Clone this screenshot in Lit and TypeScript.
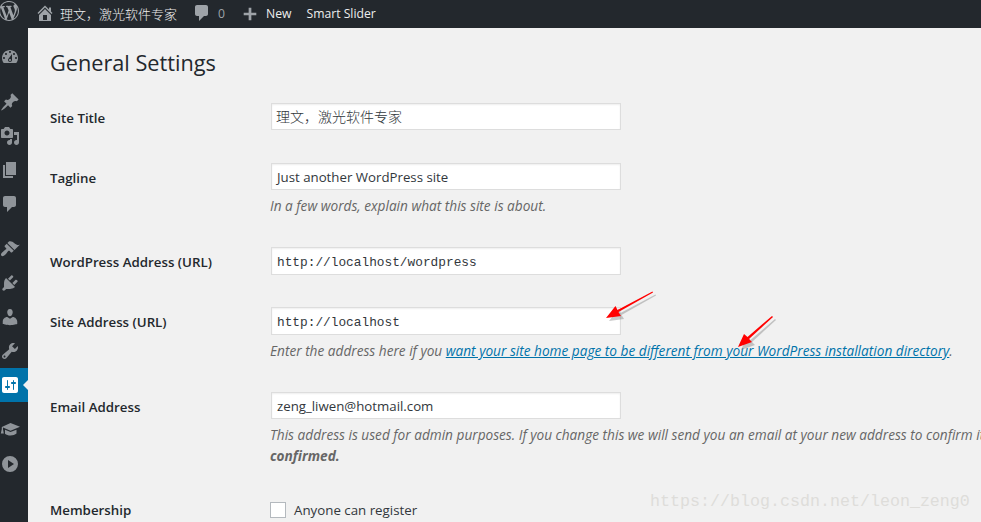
import { LitElement, html, css, svg } from "lit";
import { customElement } from "lit/decorators.js";

const P: Record<string, string> = {
  wp: "M20 10c0-5.51-4.49-10-10-10C4.48 0 0 4.49 0 10c0 5.52 4.48 10 10 10 5.51 0 10-4.48 10-10zM7.78 15.37L4.37 6.22c.55-.02 1.17-.08 1.17-.08.5-.06.44-1.13-.06-1.11 0 0-1.45.11-2.37.11-.18 0-.37 0-.58-.01C4.12 2.69 6.87 1.11 10 1.11c2.33 0 4.45.87 6.05 2.34-.68-.11-1.65.39-1.65 1.58 0 .74.45 1.36.9 2.1.35.61.55 1.36.55 2.46 0 1.49-1.4 5-1.4 5l-3.03-8.37c.54-.02.82-.17.82-.17.5-.05.44-1.25-.06-1.22 0 0-1.44.12-2.38.12-.87 0-2.33-.12-2.33-.12-.5-.03-.56 1.2-.06 1.22l.92.08 1.26 3.41zM17.41 10c.24-.64.74-1.87.43-4.25.7 1.29 1.05 2.71 1.05 4.25 0 3.29-1.73 6.24-4.4 7.78.97-2.59 1.94-5.2 2.92-7.78zM6.1 18.09C3.12 16.65 1.11 13.53 1.11 10c0-1.3.23-2.48.72-3.59C3.25 10.3 4.67 14.2 6.1 18.09zm4.03-6.63l2.58 6.98c-.86.29-1.76.45-2.71.45-.79 0-1.57-.11-2.29-.33.81-2.38 1.62-4.74 2.42-7.1z",
  home: "M16 8.5l1.53 1.53-1.06 1.06L10 4.62l-6.47 6.47-1.06-1.06L10 2.5l4 4v-2h2v4zm-6-2.46l6 5.99V18H4v-5.97zM12 17v-5H8v5h4z",
  comment: "M5 2h9c1.1 0 2 .9 2 2v7c0 1.1-.9 2-2 2h-2l-5 5v-5H5c-1.1 0-2-.9-2-2V4c0-1.1.9-2 2-2z",
  plus: "M17 8.5v3h-5.5V17h-3v-5.5H3v-3h5.5V3h3v5.5z",
  dash: "M3.76 16h12.48c1.1-1.37 1.76-3.11 1.76-5 0-4.42-3.58-8-8-8s-8 3.58-8 8c0 1.89.66 3.63 1.76 5zM10 4c.55 0 1 .45 1 1s-.45 1-1 1-1-.45-1-1 .45-1 1-1zM6 6c.55 0 1 .45 1 1s-.45 1-1 1-1-.45-1-1 .45-1 1-1zm8 0c.55 0 1 .45 1 1s-.45 1-1 1-1-.45-1-1 .45-1 1-1zm-5.37 5.55L12 7v6c0 1.1-.9 2-2 2s-2-.9-2-2c0-.57.24-1.08.63-1.45zM4 10c.55 0 1 .45 1 1s-.45 1-1 1-1-.45-1-1 .45-1 1-1zm12 0c.55 0 1 .45 1 1s-.45 1-1 1-1-.45-1-1 .45-1 1-1zm-5 3c0-.55-.45-1-1-1s-1 .45-1 1 .45 1 1 1 1-.45 1-1z",
  pin: "M10.44 3.02l1.82-1.82 6.36 6.35-1.83 1.82c-1.05-.68-2.48-.57-3.41.36l-.75.75c-.92.93-1.04 2.35-.35 3.41l-1.83 1.82-2.41-2.41-2.8 2.79c-.42.42-3.38 2.71-3.8 2.29s1.86-3.39 2.28-3.81l2.79-2.79L4.1 9.36l1.83-1.82c1.05.69 2.48.57 3.4-.36l.75-.75c.93-.92 1.05-2.35.36-3.41z",
  media: "M13 11V4c0-.55-.45-1-1-1h-1.67L9 1H5L3.67 3H2c-.55 0-1 .45-1 1v7c0 .55.45 1 1 1h10c.55 0 1-.45 1-1zM7 4.5c1.38 0 2.5 1.12 2.5 2.5S8.38 9.5 7 9.5 4.5 8.38 4.5 7 5.62 4.5 7 4.5zM14 6h5v10.5c0 1.38-1.12 2.5-2.5 2.5S14 17.88 14 16.5s1.12-2.5 2.5-2.5c.17 0 .34.02.5.05V9h-3V6zm-4 8.05V13h2v3.5c0 1.38-1.12 2.5-2.5 2.5S7 17.88 7 16.5 8.12 14 9.5 14c.17 0 .34.02.5.05z",
  page: "M6 15V2h10v13H6zm-1 1h8v2H3V5h2v11z",
  brush: "M14.48 11.06L7.41 3.99l1.5-1.5c.5-.56 2.3-.47 3.51.32 1.21.8 1.43 1.28 2.91 2.1 1.18.64 2.45 1.26 4.45.85zm-.71.71L6.7 4.7 4.93 6.47c-.39.39-.39 1.02 0 1.41l1.06 1.06c.39.39.39 1.03 0 1.42-.6.6-1.43 1.11-2.21 1.69-.35.26-.7.53-1.01.84C1.43 13.71.27 15.57 1.4 16.7c1.13 1.13 2.99-.03 4.31-1.38.31-.31.58-.66.84-1.01.58-.78 1.09-1.61 1.69-2.21.39-.39 1.02-.39 1.41 0l1.06 1.06c.39.39 1.02.39 1.41 0z",
  plug: "M13.11 4.36L9.87 7.6 8 5.73l3.24-3.24c.35-.34 1.05-.2 1.56.32.52.51.66 1.21.31 1.55zm-8 1.77l.91-1.12 9.01 9.01-1.19.84c-.71.71-2.63 1.16-3.82 1.16H6.14L4.9 17.26c-.59.59-1.54.59-2.12 0-.59-.58-.59-1.53 0-2.12l1.24-1.24v-3.88c0-1.13.4-3.19 1.09-3.89zm7.26 3.97l3.24-3.24c.34-.35 1.04-.21 1.55.31.52.51.66 1.21.31 1.55l-3.24 3.25z",
  user: "M10 9.25c-2.27 0-2.73-3.44-2.73-3.44C7 4.02 7.82 2 9.97 2c2.16 0 2.98 2.02 2.71 3.81 0 0-.41 3.44-2.68 3.44zm0 2.57L12.72 10c2.39 0 4.52 2.33 4.52 4.53v2.49s-3.65 1.13-7.24 1.13c-3.65 0-7.24-1.13-7.24-1.13v-2.49c0-2.25 1.94-4.48 4.47-4.48z",
  tools: "M16.68 9.77c-1.34 1.34-3.3 1.67-4.95.99l-5.41 6.52c-.99.99-2.59.99-3.58 0s-.99-2.59 0-3.57l6.52-5.42c-.68-1.65-.35-3.61.99-4.95 1.28-1.28 3.12-1.62 4.72-1.06l-2.89 2.89 2.82 2.82 2.86-2.87c.53 1.58.18 3.39-1.08 4.65zM3.81 16.21c.4.39 1.04.39 1.43 0 .4-.4.4-1.04 0-1.43-.39-.4-1.03-.4-1.43 0-.39.39-.39 1.03 0 1.43z",
  settings: "M18 16V4c0-1.1-.9-2-2-2H4c-1.1 0-2 .9-2 2v12c0 1.1.9 2 2 2h12c1.1 0 2-.9 2-2zM8 11h1c.55 0 1 .45 1 1s-.45 1-1 1H8v1.5c0 .28-.22.5-.5.5s-.5-.22-.5-.5V13H6c-.55 0-1-.45-1-1s.45-1 1-1h1V5.5c0-.28.22-.5.5-.5s.5.22.5.5V11zm5-2h-1c-.55 0-1-.45-1-1s.45-1 1-1h1V5.5c0-.28.22-.5.5-.5s.5.22.5.5V7h1c.55 0 1 .45 1 1s-.45 1-1 1h-1v5.5c0 .28-.22.5-.5.5s-.5-.22-.5-.5V9z",
  cap: "M10.5 3L20 6.8l-9.5 3.9L3 7.6V9.2l.8 4.3H.8L1.8 9V6.9zM5 9.8l5.5 2.3 6-2.4v3.9c-1.4 1.2-3.5 1.9-6 1.9-2.3 0-4.2-.7-5.5-1.8z",
  play: "M10 2a8 8 0 1 1 0 16 8 8 0 0 1 0-16zM8 6v8l6-4z",
};

const icon = (n: string) =>
  html`<svg class="ic" viewBox="0 0 20 20" width="20" height="20"><path fill-rule="evenodd" d=${P[n]}></path></svg>`;

const groups = [["dash"], ["pin", "media", "page", "comment"], ["brush", "plug", "user", "tools", "settings"], ["cap", "play"]];

@customElement("app-root")
export class AppRoot extends LitElement {
  static styles = css`
    :host { display: block; position: relative; width: 981px; height: 522px; overflow: hidden; background: #f1f1f1;
      font-family: "Open Sans", "Noto Sans CJK SC", sans-serif; color: #23282d; }
    .bar { height: 28px; background: #23282d; color: #eee; display: flex; align-items: center; font-size: 12.2px; white-space: nowrap; }
    .bar .ic { fill: #9ea3a8; display: block; flex: none; }
    .bar span { position: relative; top: -1px; }
    .logo { margin-left: -1px; margin-right: 15.5px; margin-top: -6px; }
    .home { margin-right: 5.5px; width: 20px; height: 20px; margin-top: -2px; }
    .site { font-size: 13px; margin-right: 15px; font-family: "Noto Sans CJK SC", sans-serif; font-weight: 300; }
    .cm { width: 20px; height: 20px; margin-right: 6px; margin-top: -2px; }
    .count { color: #9ea3a8; margin-right: 16px; }
    .pl { width: 18px; height: 18px; margin-right: 7px; }
    .new { margin-right: 15px; }
    .body { display: flex; height: 494px; }
    .side { width: 28px; flex: none; background: #23282d; padding-top: 12px; box-sizing: border-box; }
    .grp { margin-bottom: 11px; }
    .it { height: 34px; display: flex; align-items: center; position: relative; }
    .it .ic { fill: #8f9499; display: block; }
    .it.on { background: #0073aa; }
    .it.on .ic { fill: #fff; }
    .it.on::after { content: ""; position: absolute; right: 0; top: 12px; border: 5px solid transparent; border-left: 0; border-right-color: #f1f1f1; }
    .main { flex: 1; min-width: 0; padding: 21px 0 0 22px; overflow: hidden; }
    h1 { margin: 0 0 26px; font-size: 21.7px; font-weight: 400; line-height: 28px; }
    .row { display: grid; grid-template-columns: 220px 1fr; padding-bottom: 33px; }
    .row.tight { padding-bottom: 32px; }
    .row.desc-row { padding-bottom: 31px; }
    .lab { font-size: 13.3px; font-weight: 600; line-height: 31px; height: 27px; }
    .lab.short { line-height: 16px; height: 16px; }
    .val { min-width: 0; }
    .inp { box-sizing: border-box; width: 350px; margin-left: 1px; height: 27px; background: #fff; border: 1px solid #ddd; box-shadow: inset 0 1px 2px rgba(0,0,0,.07);
      padding: 0 5px; font-size: 13.25px; line-height: 27px; color: #32373c; white-space: nowrap; }
    .inp.mono { font-family: "Liberation Mono", monospace; font-size: 12.8px; height: 28px; line-height: 29px; }
    .inp.cjk { padding-left: 4px; font-size: 14px; font-family: "Noto Sans CJK SC", sans-serif; font-weight: 300; line-height: 25px; }
    .desc { margin-top: 5px; font-size: 13.65px; line-height: 21px; font-style: italic; color: #666; white-space: nowrap; }
    .desc a { color: #0073aa; text-decoration: underline; }
    .desc.two { padding-bottom: 5px; }
    .chk { display: flex; align-items: center; font-size: 13.3px; color: #32373c; line-height: 16px; }
    .box { width: 16px; height: 16px; box-sizing: border-box; background: #fff; border: 1px solid #b4b9be; margin-right: 8px; }
    .arrows { position: absolute; left: 0; top: 0; pointer-events: none; }
    .mark { position: absolute; left: 650px; top: 491px; font-family: "Liberation Mono", monospace; font-size: 16.67px; line-height: 22px; color: #dedddA; white-space: nowrap; }
  `;

  render() {
    return html`
      <div class="bar">
        <svg class="ic logo" viewBox="0 0 20 20" width="20" height="20"><path d=${P.wp}></path></svg>
        <svg class="ic home" viewBox="0 0 20 20"><path fill-rule="evenodd" d=${P.home}></path></svg>
        <span class="site">理文，激光软件专家</span>
        <svg class="ic cm" viewBox="0 0 20 20"><path d=${P.comment}></path></svg>
        <span class="count">0</span>
        <svg class="ic pl" viewBox="0 0 20 20"><path d=${P.plus}></path></svg>
        <span class="new">New</span>
        <span>Smart Slider</span>
      </div>
      <div class="body">
        <nav class="side">
          ${groups.map((g) => html`<div class="grp">${g.map((n) => html`<div class="it ${n === "settings" ? "on" : ""}">${icon(n)}</div>`)}</div>`)}
        </nav>
        <main class="main">
          <h1>General Settings</h1>
          <div class="row"><div class="lab">Site Title</div><div class="val"><div class="inp cjk">理文，激光软件专家</div></div></div>
          <div class="row desc-row"><div class="lab">Tagline</div><div class="val"><div class="inp">Just another WordPress site</div><div class="desc">In a few words, explain what this site is about.</div></div></div>
          <div class="row tight"><div class="lab">WordPress Address (URL)</div><div class="val"><div class="inp mono">http://localhost/wordpress</div></div></div>
          <div class="row desc-row"><div class="lab">Site Address (URL)</div><div class="val"><div class="inp mono">http://localhost</div><div class="desc">Enter the address here if you <a>want your site home page to be different from your WordPress installation directory</a>.</div></div></div>
          <div class="row desc-row"><div class="lab">Email Address</div><div class="val"><div class="inp">zeng_liwen@hotmail.com</div><div class="desc two">This address is used for admin purposes. If you change this we will send you an email at your new address to confirm it. <strong>The new address will not become active until</strong><br><strong>confirmed.</strong></div></div></div>
          <div class="row"><div class="lab short">Membership</div><div class="val"><label class="chk"><span class="box"></span>Anyone can register</label></div></div>
        </main>
      </div>
      <svg class="arrows" width="981" height="522" viewBox="0 0 981 522">
        ${svg`<g fill="#888" opacity=".45" transform="translate(3 3)">
          <path d="M653 292.5 L618.5 312 L621 316 L606 318 L615.5 306 L617.5 310 L652.5 291.5z"></path>
          <path d="M773 317 L749 339 L752 342 L738 347 L744 334 L747.5 337 L772 316z"></path></g>
        <g fill="#f00">
          <path d="M653 292.5 L618.5 312 L621 316 L606 318 L615.5 306 L617.5 310 L652.5 291.5z"></path>
          <path d="M773 317 L749 339 L752 342 L738 347 L744 334 L747.5 337 L772 316z"></path></g>`}
      </svg>
      <div class="mark">https://blog.csdn.net/leon_zeng0</div>
    `;
  }
}
